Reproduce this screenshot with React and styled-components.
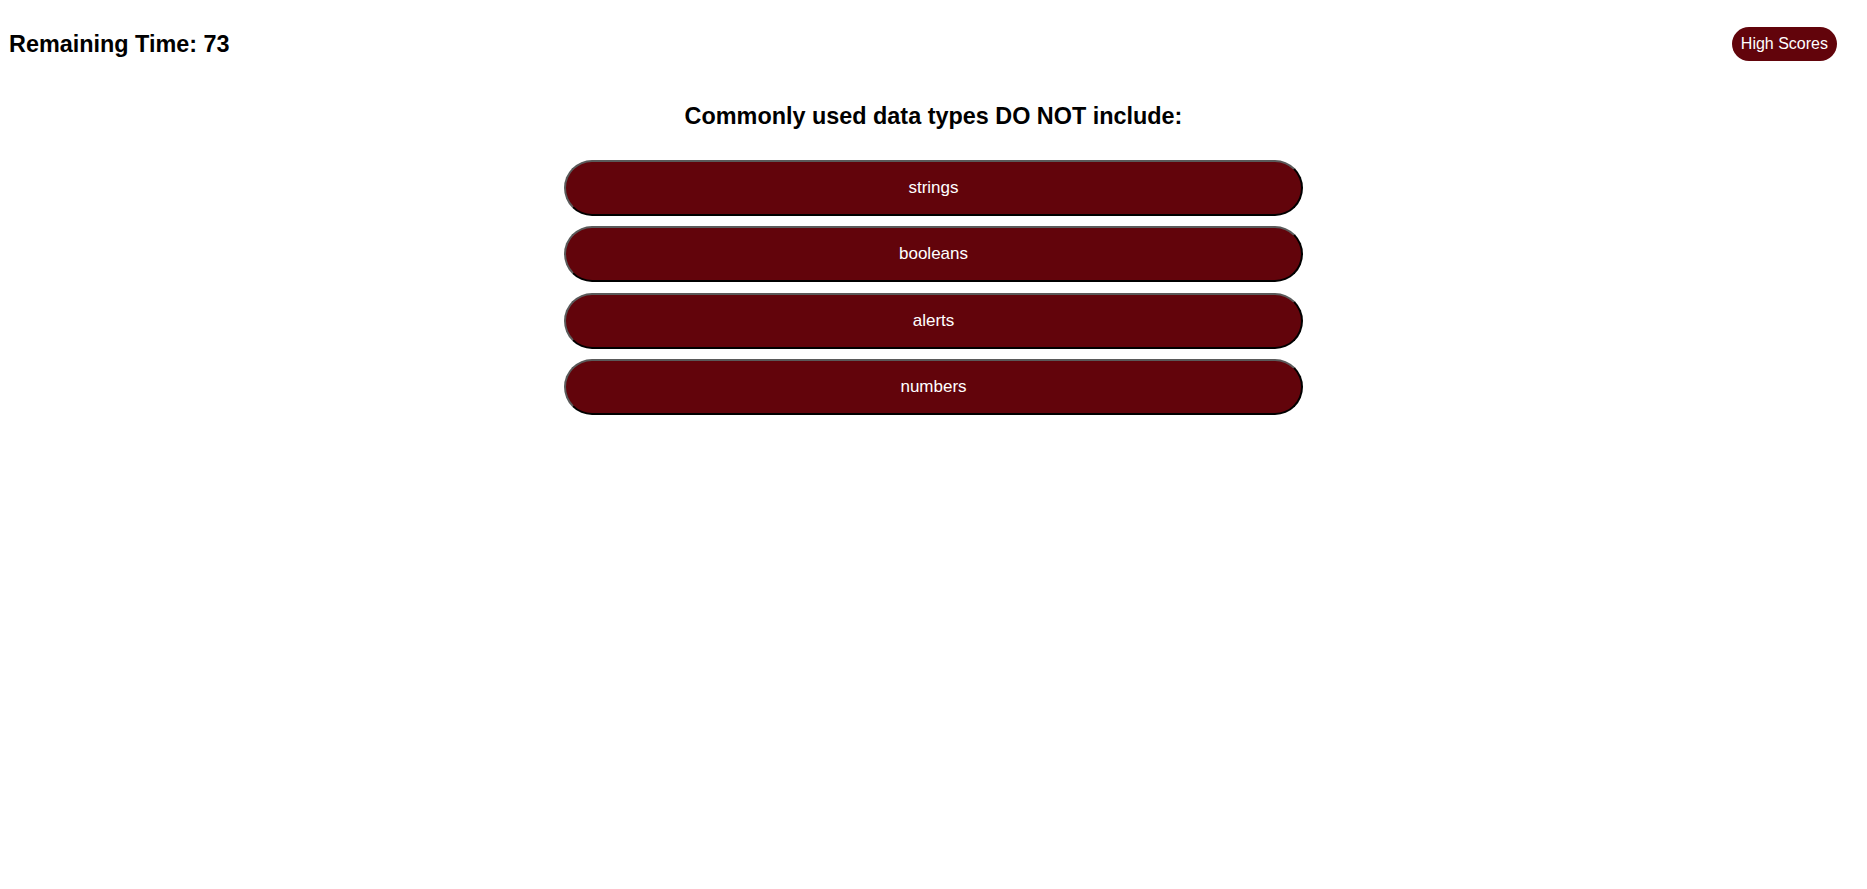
import React from "react";
import styled, { createGlobalStyle } from "styled-components";

const GlobalStyle = createGlobalStyle`
  html, body {
    margin: 0;
    padding: 0;
    background: #ffffff;
  }
  body {
    font-family: "Liberation Sans", Arial, sans-serif;
    color: #000;
  }
`;

const Page = styled.div`
  display: flex;
  flex-direction: column;
  padding: 27px 30px 0 9px;
`;

const Header = styled.header`
  display: flex;
  justify-content: space-between;
  align-items: center;
  height: 34px;
`;

const Timer = styled.h2`
  margin: 1px 0 0 0;
  font-size: 23.4px;
  line-height: 27px;
  font-weight: bold;
`;

const PillButton = styled.button`
  font-family: "Liberation Sans", Arial, sans-serif;
  font-size: 16px;
  line-height: 18px;
  color: #ffffff;
  background: #62040b;
  border: none;
  border-radius: 17px;
  padding: 8px 9px;
  height: 34px;
  cursor: pointer;
`;

const Quiz = styled.main`
  display: flex;
  flex-direction: column;
  align-items: center;
  margin: 42px 0 0 21px;
`;

const Question = styled.h3`
  margin: 0 0 30px 0;
  font-size: 23.4px;
  line-height: 27px;
  font-weight: bold;
  text-align: center;
`;

const Choices = styled.div`
  display: flex;
  flex-direction: column;
  gap: 10.4px;
  width: 739px;
`;

const Choice = styled.button`
  box-sizing: border-box;
  width: 100%;
  height: 56px;
  font-family: "Liberation Sans", Arial, sans-serif;
  font-size: 17px;
  color: #ffffff;
  background: #62040b;
  border-width: 2px;
  border-style: solid;
  border-color: #5a5a5a #000000 #000000 #5a5a5a;
  border-radius: 28px;
  cursor: pointer;
`;

const choices = ["strings", "booleans", "alerts", "numbers"];

export default function App() {
  return (
    <>
      <GlobalStyle />
      <Page>
        <Header>
          <Timer>Remaining Time: 73</Timer>
          <PillButton>High Scores</PillButton>
        </Header>
        <Quiz>
          <Question>Commonly used data types DO NOT include:</Question>
          <Choices>
            {choices.map((c) => (
              <Choice key={c}>{c}</Choice>
            ))}
          </Choices>
        </Quiz>
      </Page>
    </>
  );
}
